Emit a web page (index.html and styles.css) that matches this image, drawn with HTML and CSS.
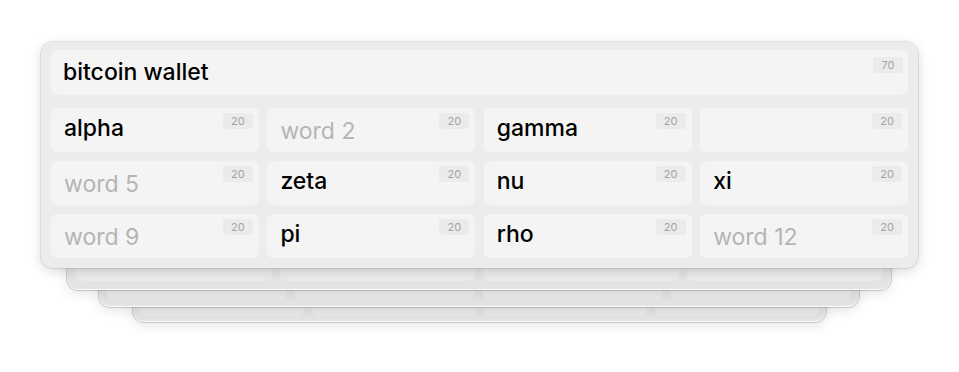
FILE: index.html
```html
<!DOCTYPE html>
<html>
<head>
    <title>Seed Words</title>
    <link rel="stylesheet" href="styles.css">
</head>
<body>
    <div class="deck">
        <!-- cards stacked behind, only their bottom edge peeks out -->
        <div class="sheet sheet-3">
            <div class="sheet-row"><div></div><div></div><div></div><div></div></div>
        </div>
        <div class="sheet sheet-2">
            <div class="sheet-row"><div></div><div></div><div></div><div></div></div>
        </div>
        <div class="sheet sheet-1">
            <div class="sheet-row"><div></div><div></div><div></div><div></div></div>
        </div>

        <div class="card">
            <div class="field title-field">
                <span class="value">bitcoin wallet</span>
                <span class="count">70</span>
            </div>
            <div class="words">
                <div class="field"><span class="value">alpha</span><span class="count">20</span></div>
                <div class="field"><span class="value empty">word 2</span><span class="count">20</span></div>
                <div class="field"><span class="value">gamma</span><span class="count">20</span></div>
                <div class="field"><span class="value"></span><span class="count">20</span></div>

                <div class="field"><span class="value empty">word 5</span><span class="count">20</span></div>
                <div class="field"><span class="value">zeta</span><span class="count">20</span></div>
                <div class="field"><span class="value">nu</span><span class="count">20</span></div>
                <div class="field"><span class="value">xi</span><span class="count">20</span></div>

                <div class="field"><span class="value empty">word 9</span><span class="count">20</span></div>
                <div class="field"><span class="value">pi</span><span class="count">20</span></div>
                <div class="field"><span class="value">rho</span><span class="count">20</span></div>
                <div class="field"><span class="value empty">word 12</span><span class="count">20</span></div>
            </div>
        </div>
    </div>
</body>
</html>
```

FILE: styles.css
```css
body {
    font-family: Inter, 'Noto Sans', sans-serif;
    background-color: #fff;
    margin: 0;
    min-height: 100vh;
}

/* all cards share one grid cell, the back ones peek out below */
.deck {
    display: grid;
    width: 877px;
    margin: 42px 0 0 41px;
    padding-bottom: 60px;
}

.deck > div {
    grid-area: 1 / 1;
}

.card {
    position: relative;
    z-index: 4;
    background-color: #ececec;
    border-radius: 12px;
    padding: 8px 10px 10px;
    box-shadow: 0 0 0 1px rgba(0, 0, 0, 0.08), 0 3px 12px rgba(0, 0, 0, 0.16);
}

.field {
    position: relative;
    background-color: #f4f4f4;
    border-radius: 6px;
    height: 44px;
    padding: 0 13px 5px;
    display: flex;
    align-items: center;
    box-sizing: border-box;
}

.title-field {
    height: 45px;
    padding-left: 12px;
    padding-bottom: 1px;
    margin-bottom: 13px;
}

.value {
    font-size: 23px;
    font-weight: 450;
    color: #000;
}

.value.empty {
    color: #b4b4b4;
    font-weight: 400;
    padding-top: 7px;
}

.count {
    position: absolute;
    top: 5px;
    right: 6px;
    width: 30px;
    height: 16px;
    line-height: 16px;
    text-align: center;
    font-size: 11px;
    color: #a3a3a3;
    background-color: #ebebeb;
    border-radius: 3px;
}

.title-field .count {
    top: 7px;
    right: 5px;
}

.words {
    display: grid;
    grid-template-columns: repeat(4, 1fr);
    gap: 9px 8.5px;
}

/* back cards */
.sheet {
    position: relative;
    background-color: #e4e4e4;
    border-radius: 11px;
    display: flex;
    flex-direction: column;
    justify-content: flex-end;
    box-sizing: border-box;
    box-shadow: inset 0 -1px 0 rgba(255, 255, 255, 0.8), 0 0 0 1px rgba(0, 0, 0, 0.16), 0 4px 12px rgba(0, 0, 0, 0.1);
}

.sheet-1 {
    z-index: 3;
    margin: 20px 27px -22px 26px;
    padding: 9px;
}

.sheet-2 {
    z-index: 2;
    margin: 40px 59px -39px 58px;
    padding: 8px;
}

.sheet-3 {
    z-index: 1;
    margin: 60px 92px -54px 92px;
    padding: 6px 7px;
}

.sheet-row {
    display: grid;
    grid-template-columns: repeat(4, 1fr);
    gap: 8px;
}

.sheet-row div {
    height: 40px;
    border-radius: 6px;
    background-color: #ebebeb;
}
```
